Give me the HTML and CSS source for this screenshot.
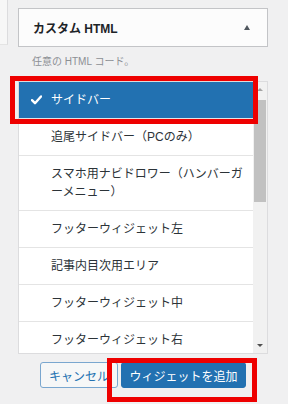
FILE: index.html
```html
<!DOCTYPE html>
<html lang="ja">
<head>
    <meta charset="UTF-8">
    <meta name="viewport" content="width=device-width, initial-scale=1.0">
    <title>カスタム HTML</title>
    <link rel="stylesheet" href="styles.css">
</head>
<body>
    <div class="page">
        <div class="side"></div>
        <div class="main">
            <!-- Widget header -->
            <div class="widget-head">
                <span class="widget-title">カスタム HTML</span>
                <span class="toggle"></span>
            </div>
            <p class="desc">任意の HTML コード。</p>

            <!-- Sidebar chooser -->
            <div class="chooser">
                <ul class="areas">
                    <li class="selected">
                        <svg class="check" width="11" height="10" viewBox="0 0 11 10">
                            <path d="M1 5.2 L4 8.2 L10 1.5" fill="none" stroke="#fff" stroke-width="2.4" stroke-linecap="round" stroke-linejoin="round"/>
                        </svg>
                        サイドバー
                    </li>
                    <li>追尾サイドバー（PCのみ）</li>
                    <li>スマホ用ナビドロワー（ハンバーガーメニュー）</li>
                    <li>フッターウィジェット左</li>
                    <li>記事内目次用エリア</li>
                    <li>フッターウィジェット中</li>
                    <li>フッターウィジェット右</li>
                </ul>
                <div class="scrollbar">
                    <span class="arrow up"></span>
                    <span class="thumb"></span>
                    <span class="arrow down"></span>
                </div>
            </div>

            <div class="actions">
                <button class="btn cancel">キャンセル</button>
                <button class="btn add">ウィジェットを追加</button>
            </div>
        </div>
    </div>

    <!-- annotation frames -->
    <div class="mark mark-list"></div>
    <div class="mark mark-add"></div>
</body>
</html>
```

FILE: styles.css
```css
body {
    margin: 0;
    background-color: #f0f0f1;
    font-family: "Liberation Sans", "Noto Sans CJK JP", sans-serif;
    color: #3c434a;
}
.page {
    display: flex;
    align-items: flex-start;
}
.side {
    width: 7px;
    height: 44px;
    background-color: #f7f7f7;
    border-right: 1px solid #dcdcde;
    border-bottom: 1px solid #e4e4e4;
}
.main {
    width: 250px;
    margin-left: 10px;
    padding-top: 8px;
}
.widget-head {
    height: 37px;
    display: flex;
    align-items: center;
    justify-content: space-between;
    padding: 0 17px 0 14px;
    background-color: #fcfcfc;
    border: 1px solid #c3c4c7;
}
.widget-title {
    font-size: 12px;
    font-weight: bold;
    color: #1d2327;
}
.toggle {
    width: 0;
    height: 0;
    border-left: 3.5px solid transparent;
    border-right: 3.5px solid transparent;
    border-bottom: 5px solid #50575e;
    margin-top: -1px;
}
.desc {
    margin: 7px 0 11px 14px;
    font-size: 10px;
    line-height: 16px;
    color: #8c8f94;
}
.chooser {
    height: 271px;
    display: flex;
    background-color: #fff;
    border: 1px solid #dcdcde;
    overflow: hidden;
}
.areas {
    flex: 1;
    margin: 0;
    padding: 0;
    list-style: none;
}
.areas li {
    position: relative;
    padding: 9px 8px 9px 32px;
    font-size: 12px;
    line-height: 18px;
    color: #2c3338;
    border-bottom: 1px solid #e4e4e4;
}
.areas li.selected {
    background-color: #2271b1;
    color: #fff;
}
.check {
    position: absolute;
    left: 12px;
    top: 13px;
}
.scrollbar {
    width: 14px;
    display: flex;
    flex-direction: column;
    align-items: center;
    background-color: #f1f1f1;
}
.arrow {
    width: 0;
    height: 0;
    border-left: 3px solid transparent;
    border-right: 3px solid transparent;
}
.arrow.up {
    margin: 6px 0 9px;
    border-bottom: 3px solid #a3a3a3;
}
.arrow.down {
    margin-top: auto;
    margin-bottom: 6px;
    border-top: 3px solid #505050;
}
.thumb {
    width: 12px;
    height: 102px;
    background-color: #c1c1c1;
}
.actions {
    display: flex;
    justify-content: center;
    gap: 3px;
    margin-top: 8px;
}
.btn {
    height: 26px;
    padding: 0;
    font-family: inherit;
    font-size: 12px;
    white-space: nowrap;
    border-radius: 3px;
    border: 1px solid #2271b1;
}
.btn.cancel {
    background-color: #f6f7f7;
    color: #2271b1;
    border-color: #7aa7cf;
    width: 78px;
}
.btn.add {
    background-color: #2271b1;
    color: #fff;
    width: 125px;
}
.mark {
    position: absolute;
    border: 5px solid #ee0000;
}
.mark-list {
    left: 10px;
    top: 76px;
    width: 238px;
    height: 38px;
}
.mark-add {
    left: 107px;
    top: 358px;
    width: 140px;
    height: 34px;
}
```
